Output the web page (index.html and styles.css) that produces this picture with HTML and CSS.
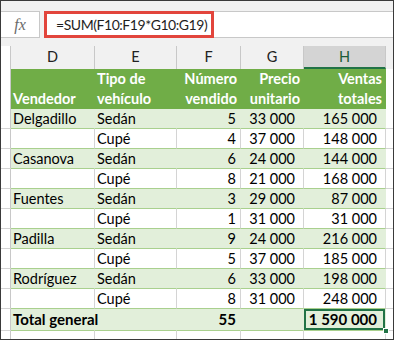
FILE: index.html
```html
<!DOCTYPE html>
<html lang="es">
<head>
<meta charset="utf-8">
<link rel="stylesheet" href="styles.css">
</head>
<body>
<div class="frame">
  <div class="fbar">
    <div class="fx">fx</div>
    <div class="input"><span class="formula">=SUM(F10:F19*G10:G19)</span></div>
  </div>
  <div class="sheet">
    <div class="row colhdr">
      <div class="c rh"></div><div class="c">D</div><div class="c">E</div><div class="c">F</div><div class="c">G</div><div class="c selhdr">H</div><div class="c ci"></div>
    </div>
    <div class="row thead">
      <div class="c rh"></div>
      <div class="c h l">Vendedor</div>
      <div class="c h l">Tipo de<br>vehículo</div>
      <div class="c h r">Número<br>vendido</div>
      <div class="c h r">Precio<br>unitario</div>
      <div class="c h r">Ventas<br>totales</div>
      <div class="c ci"></div>
    </div>
    <div class="row d g"><div class="c rh"></div><div class="c l">Delgadillo</div><div class="c l">Sedán</div><div class="c n f">5</div><div class="c n">33 000</div><div class="c n">165 000</div><div class="c ci"></div></div>
    <div class="row d"><div class="c rh"></div><div class="c l"></div><div class="c l">Cupé</div><div class="c n f">4</div><div class="c n">37 000</div><div class="c n">148 000</div><div class="c ci"></div></div>
    <div class="row d g"><div class="c rh"></div><div class="c l">Casanova</div><div class="c l">Sedán</div><div class="c n f">6</div><div class="c n">24 000</div><div class="c n">144 000</div><div class="c ci"></div></div>
    <div class="row d"><div class="c rh"></div><div class="c l"></div><div class="c l">Cupé</div><div class="c n f">8</div><div class="c n">21 000</div><div class="c n">168 000</div><div class="c ci"></div></div>
    <div class="row d g"><div class="c rh"></div><div class="c l">Fuentes</div><div class="c l">Sedán</div><div class="c n f">3</div><div class="c n">29 000</div><div class="c n">87 000</div><div class="c ci"></div></div>
    <div class="row d"><div class="c rh"></div><div class="c l"></div><div class="c l">Cupé</div><div class="c n f">1</div><div class="c n">31 000</div><div class="c n">31 000</div><div class="c ci"></div></div>
    <div class="row d g"><div class="c rh"></div><div class="c l">Padilla</div><div class="c l">Sedán</div><div class="c n f">9</div><div class="c n">24 000</div><div class="c n">216 000</div><div class="c ci"></div></div>
    <div class="row d"><div class="c rh"></div><div class="c l"></div><div class="c l">Cupé</div><div class="c n f">5</div><div class="c n">37 000</div><div class="c n">185 000</div><div class="c ci"></div></div>
    <div class="row d g"><div class="c rh"></div><div class="c l">Rodríguez</div><div class="c l">Sedán</div><div class="c n f">6</div><div class="c n">33 000</div><div class="c n">198 000</div><div class="c ci"></div></div>
    <div class="row d"><div class="c rh"></div><div class="c l"></div><div class="c l">Cupé</div><div class="c n f">8</div><div class="c n">31 000</div><div class="c n">248 000</div><div class="c ci"></div></div>
    <div class="row d g total"><div class="c rh"></div><div class="c l b over">Total general</div><div class="c l"></div><div class="c n f b">55</div><div class="c n"></div><div class="c n b sel">1 590 000<span class="handle"></span></div><div class="c ci"></div></div>
    <div class="row empty"><div class="c rh"></div><div class="c"></div><div class="c"></div><div class="c"></div><div class="c"></div><div class="c"></div><div class="c ci"></div></div>
  </div>
</div>
</body>
</html>
```
FILE: styles.css
```css
* { box-sizing: border-box; }
html, body { margin: 0; padding: 0; background: #ffffff; }
body { font-family: Lato, "Open Sans", sans-serif; font-size: 14.5px; color: #000; }

.frame {
  width: 394px;
  height: 340px;
  border: 1px solid #3a3a3a;
  background: #ffffff;
  overflow: hidden;
}

.fbar {
  height: 44px;
  background: #f1f1f1;
  display: flex;
  align-items: flex-start;
  padding-top: 10px;
  gap: 4px;
}
.fx {
  width: 39px;
  height: 27px;
  background: #ffffff;
  border: 1px solid #c8c8c8;
  border-left: none;
  font-family: "Liberation Serif", serif;
  font-style: italic;
  color: #6a6a6a;
  font-size: 16px;
  display: flex;
  align-items: center;
  justify-content: center;
}
.input {
  flex: 1;
  height: 27px;
  background: #ffffff;
  border: 1px solid #c8c8c8;
  border-right: none;
  display: flex;
}
.formula {
  display: flex;
  align-items: center;
  flex: 0 0 170px;
  min-width: 0;
  height: 27px;
  margin: -1px 0 0 -1px;
  border: 3px solid #e2453c;
  padding-left: 9px;
  font-size: 14px;
  letter-spacing: -0.45px;
  color: #1e1e1e;
  white-space: nowrap;
  overflow: hidden;
}

.sheet { display: flex; flex-direction: column; }
.row {
  display: grid;
  grid-template-columns: 10px 84px 82px 64px 63px 82px 1fr;
}
.c {
  border-right: 1px solid #d4d4d4;
  white-space: nowrap;
  overflow: visible;
}
.c.ci { border-right: none; }

.colhdr { height: 24px; background: #f1f1f1; padding-top: 1px; }
.colhdr .c {
  border-right-color: #c8c8c8;
  text-align: center;
  line-height: 21px;
  font-size: 14.5px;
  color: #222;
}
.colhdr .selhdr {
  background: #d4d4d4;
  border-bottom: 2px solid #217346;
  color: #1c5c38;
}

.thead { height: 40px; }
.thead .h {
  background: #70ad47;
  color: #ffffff;
  font-weight: 700;
  line-height: 20px;
  display: flex;
  flex-direction: column;
  justify-content: flex-end;
  padding-bottom: 0;
  border-right-color: #70ad47;
}
.thead .h.l { padding-left: 2px; }
.thead .h.r { text-align: right; padding-right: 3px; }

.d { height: 20px; }
.d .c { line-height: 19px; border-bottom: 1px solid #a9d08e; }
.d .c.rh, .d .c.ci { border-bottom: 1px solid #d4d4d4; }
.d.g .c:not(.rh):not(.ci) { background: #e2efda; border-right-color: #e2efda; }
.d .c.l { padding-left: 2px; }
.d .c.n { text-align: right; padding-right: 8px; }
.d .c.n.f { padding-right: 4px; }
.b { font-weight: 700; }

.d.total { height: 22px; }
.total .c { line-height: 21px; }
.total .over { position: relative; z-index: 1; font-size: 15px; }
.total .b { font-size: 15px; }
.total .sel {
  position: relative;
  box-shadow: inset 0 0 0 2px #217346;
  border-right-color: #217346;
  padding-right: 9px;
}
.handle {
  position: absolute;
  right: -4px;
  bottom: -4px;
  width: 6px;
  height: 6px;
  background: #217346;
  border: 1px solid #ffffff;
  z-index: 2;
}

.empty { height: 8px; }
.empty .c { border-right-color: #d4d4d4; }
.rh { background: #ffffff; border-right-color: #c8c8c8 !important; }
```
